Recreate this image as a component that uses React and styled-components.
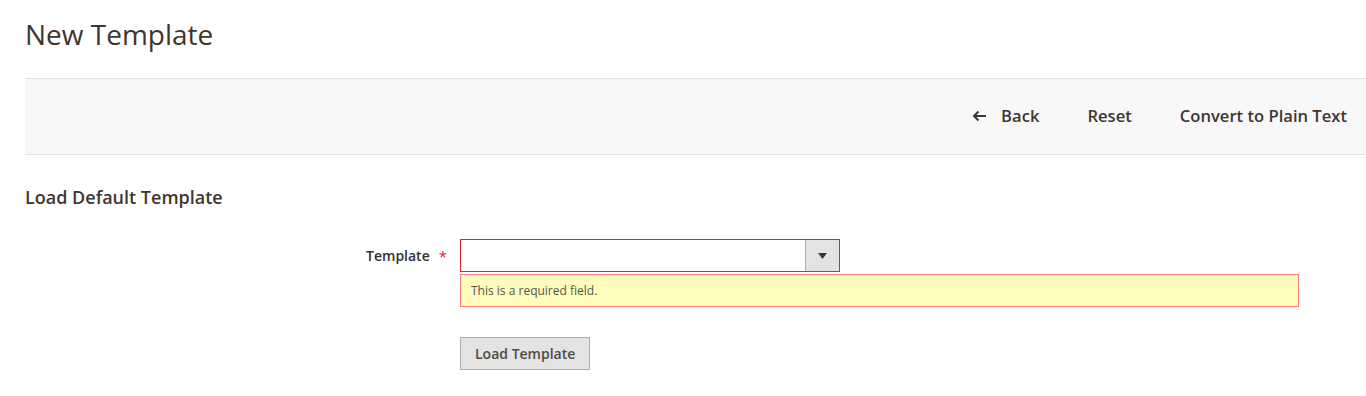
import React from 'react';
import styled, { createGlobalStyle } from 'styled-components';

const GlobalStyle = createGlobalStyle`
    body {
        margin: 0;
        background: #fff;
        font-family: 'Open Sans', 'Liberation Sans', sans-serif;
        color: #41362f;
    }
`;

const Page = styled.main`
    padding-left: 25px;
`;

const PageTitle = styled.h1`
    margin: 0;
    padding: 16px 0 18px;
    font-size: 28px;
    font-weight: 400;
    line-height: 36px;
    color: #41362f;
`;

const Toolbar = styled.div`
    display: flex;
    justify-content: flex-end;
    align-items: center;
    gap: 48px;
    height: 75px;
    box-sizing: border-box;
    padding: 0 19px 2px 0;
    height: 77px;
    margin-top: 8px;
    background: #f8f8f8;
    border-top: 1px solid #e3e3e3;
    border-bottom: 1px solid #e3e3e3;
`;

const ToolbarButton = styled.button`
    display: flex;
    align-items: center;
    gap: 14px;
    padding: 0;
    border: 0;
    background: transparent;
    font-family: inherit;
    font-size: 16.6px;
    font-weight: 600;
    color: #41362f;
    cursor: pointer;
`;

const SectionTitle = styled.h2`
    margin: 30px 0 0;
    font-size: 18px;
    font-weight: 600;
    line-height: 24px;
    color: #41362f;
`;

const Field = styled.div`
    display: grid;
    grid-template-columns: 435px 839px;
    margin-top: 30px;
`;

const Label = styled.label`
    display: flex;
    justify-content: flex-end;
    align-items: center;
    gap: 9px;
    height: 33px;
    padding-right: 13px;
    font-size: 14px;
    font-weight: 600;
    color: #303030;
`;

const Required = styled.span`
    color: #e22626;
    font-size: 15px;
    font-weight: 400;
`;

const Control = styled.div`
    display: flex;
    flex-direction: column;
    gap: 2px;
`;

const Select = styled.div`
    display: flex;
    width: 380px;
    height: 33px;
    box-sizing: border-box;
    border: 1px solid #e22626;
    background: #fff;
`;

const SelectValue = styled.div`
    flex: 1;
`;

const SelectArrow = styled.div`
    display: flex;
    align-items: center;
    justify-content: center;
    width: 33px;
    background: #e3e3e3;
    border-left: 1px solid #adadad;
`;

const ErrorBox = styled.div`
    box-sizing: border-box;
    height: 33px;
    display: flex;
    align-items: center;
    padding-left: 10px;
    background: #fffbbb;
    border: 1px solid #fa8080;
    font-size: 12px;
    color: #555;
`;

const ActionRow = styled.div`
    margin: 30px 0 0 435px;
`;

const Button = styled.button`
    height: 33px;
    padding: 0 14px;
    background: #e3e3e3;
    border: 1px solid #adadad;
    font-family: inherit;
    font-size: 14px;
    font-weight: 600;
    color: #514943;
    cursor: pointer;
`;

const BackArrow = () => (
    <svg width="15" height="12" viewBox="0 0 15 12" fill="none">
        <path d="M14 6H2M6.5 1.5L2 6l4.5 4.5" stroke="#41362f" strokeWidth="2" />
    </svg>
);

const App = () => {
    return (
        <Page>
            <GlobalStyle />
            <PageTitle>New Template</PageTitle>
            <Toolbar>
                <ToolbarButton>
                    <BackArrow />
                    Back
                </ToolbarButton>
                <ToolbarButton>Reset</ToolbarButton>
                <ToolbarButton>Convert to Plain Text</ToolbarButton>
            </Toolbar>
            <SectionTitle>Load Default Template</SectionTitle>
            <Field>
                <Label>
                    Template <Required>*</Required>
                </Label>
                <Control>
                    <Select>
                        <SelectValue />
                        <SelectArrow>
                            <svg width="9" height="6" viewBox="0 0 9 6">
                                <path d="M0 0h9L4.5 6z" fill="#41362f" />
                            </svg>
                        </SelectArrow>
                    </Select>
                    <ErrorBox>This is a required field.</ErrorBox>
                </Control>
            </Field>
            <ActionRow>
                <Button>Load Template</Button>
            </ActionRow>
        </Page>
    );
};

export default App;
